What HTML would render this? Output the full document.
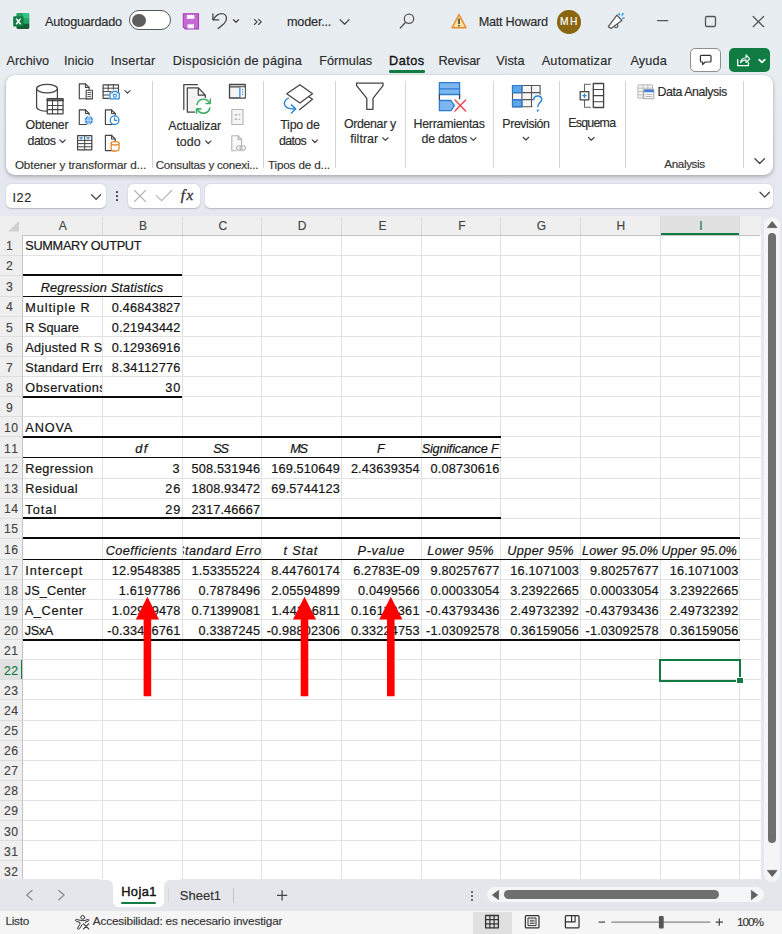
<!DOCTYPE html>
<html lang="es"><head><meta charset="utf-8"><title>Excel</title>
<style>
html,body{margin:0;padding:0;background:#e8edf1;}
body{width:782px;height:934px;overflow:hidden;}
#app{position:relative;width:782px;height:934px;overflow:hidden;background:linear-gradient(180deg,#e8edf1 0,#e8edf1 70px,#e5e8f0 185px,#e5e8f0 100%);font-family:"Liberation Sans",sans-serif;}
.r{position:absolute;}
.t{position:absolute;white-space:pre;line-height:1;}
.clip{position:absolute;overflow:hidden;}
svg{position:absolute;overflow:visible;}

</style></head>
<body>
<div id="app">
<div class="r" style="left:5.60px;top:75.30px;width:767.60px;height:99.90px;background:#ffffff;border-radius:9px;box-shadow:0 2px 4px rgba(0,0,0,.24),0 0 1.5px rgba(0,0,0,.16);"></div>
<div class="r" style="left:389.00px;top:70.10px;width:35.60px;height:2.50px;background:#107c41;border-radius:1.2px;"></div>
<div class="r" style="left:151.90px;top:80.50px;width:1.00px;height:87.50px;background:#d4d4d4;"></div>
<div class="r" style="left:262.50px;top:80.50px;width:1.00px;height:87.50px;background:#d4d4d4;"></div>
<div class="r" style="left:334.90px;top:80.50px;width:1.00px;height:87.50px;background:#d4d4d4;"></div>
<div class="r" style="left:404.70px;top:80.50px;width:1.00px;height:87.50px;background:#d4d4d4;"></div>
<div class="r" style="left:493.30px;top:80.50px;width:1.00px;height:87.50px;background:#d4d4d4;"></div>
<div class="r" style="left:559.00px;top:80.50px;width:1.00px;height:87.50px;background:#d4d4d4;"></div>
<div class="r" style="left:624.80px;top:80.50px;width:1.00px;height:87.50px;background:#d4d4d4;"></div>
<div class="r" style="left:743.00px;top:80.50px;width:1.00px;height:87.50px;background:#d4d4d4;"></div>
<div class="r" style="left:689.60px;top:48.10px;width:31.70px;height:24.20px;background:#fff;border:1px solid #8f8f8f;border-radius:5px;box-sizing:border-box;"></div>
<div class="r" style="left:729.10px;top:48.10px;width:41.40px;height:24.20px;background:#107c41;border-radius:5px;"></div>
<div class="r" style="left:128.60px;top:10.30px;width:42.20px;height:19.90px;background:#fff;border:1.3px solid #555;border-radius:10px;box-sizing:border-box;"></div>
<div class="r" style="left:132.00px;top:13.60px;width:13.60px;height:13.60px;background:#5d5d5d;border-radius:50%;"></div>
<div class="r" style="left:557.00px;top:10.00px;width:23.60px;height:23.60px;background:#8a6611;border-radius:50%;"></div>
<div class="r" style="left:6.30px;top:183.60px;width:100.00px;height:24.40px;background:#fff;border-radius:5px;box-shadow:0 .5px 1.4px rgba(0,0,0,.2),0 0 .8px rgba(0,0,0,.14);"></div>
<div class="r" style="left:127.60px;top:183.60px;width:72.00px;height:24.40px;background:#fff;border-radius:5px;box-shadow:0 .5px 1.4px rgba(0,0,0,.2),0 0 .8px rgba(0,0,0,.14);"></div>
<div class="r" style="left:205.20px;top:183.60px;width:568.20px;height:24.40px;background:#fff;border-radius:5px;box-shadow:0 .5px 1.4px rgba(0,0,0,.2),0 0 .8px rgba(0,0,0,.14);"></div>
<div class="r" style="left:115.70px;top:190.90px;width:2.50px;height:2.50px;background:#3a3a3a;border-radius:35%;"></div>
<div class="r" style="left:115.70px;top:194.90px;width:2.50px;height:2.50px;background:#3a3a3a;border-radius:35%;"></div>
<div class="r" style="left:115.70px;top:198.90px;width:2.50px;height:2.50px;background:#3a3a3a;border-radius:35%;"></div>
<div class="r" style="left:0.00px;top:215.80px;width:760.80px;height:663.70px;background:#fff;"></div>
<div class="r" style="left:0.00px;top:215.80px;width:760.80px;height:19.30px;background:#efefef;"></div>
<div class="r" style="left:0.00px;top:215.80px;width:22.60px;height:663.70px;background:#efefef;"></div>
<div class="r" style="left:660.20px;top:215.80px;width:79.70px;height:19.30px;background:#e1e1e1;"></div>
<div class="r" style="left:660.20px;top:233.10px;width:79.70px;height:2.00px;background:#107c41;"></div>
<div class="r" style="left:0.00px;top:659.78px;width:22.60px;height:20.08px;background:#e1e1e1;"></div>
<div class="r" style="left:20.60px;top:659.78px;width:2.00px;height:20.08px;background:#107c41;"></div>
<div class="r" style="left:101.80px;top:235.10px;width:1.00px;height:644.40px;background:#e2e2e2;"></div>
<div class="r" style="left:101.80px;top:216.80px;width:1.00px;height:18.30px;background:#dadada;"></div>
<div class="r" style="left:181.50px;top:235.10px;width:1.00px;height:644.40px;background:#e2e2e2;"></div>
<div class="r" style="left:181.50px;top:216.80px;width:1.00px;height:18.30px;background:#dadada;"></div>
<div class="r" style="left:261.20px;top:235.10px;width:1.00px;height:644.40px;background:#e2e2e2;"></div>
<div class="r" style="left:261.20px;top:216.80px;width:1.00px;height:18.30px;background:#dadada;"></div>
<div class="r" style="left:340.90px;top:235.10px;width:1.00px;height:644.40px;background:#e2e2e2;"></div>
<div class="r" style="left:340.90px;top:216.80px;width:1.00px;height:18.30px;background:#dadada;"></div>
<div class="r" style="left:420.60px;top:235.10px;width:1.00px;height:644.40px;background:#e2e2e2;"></div>
<div class="r" style="left:420.60px;top:216.80px;width:1.00px;height:18.30px;background:#dadada;"></div>
<div class="r" style="left:500.30px;top:235.10px;width:1.00px;height:644.40px;background:#e2e2e2;"></div>
<div class="r" style="left:500.30px;top:216.80px;width:1.00px;height:18.30px;background:#dadada;"></div>
<div class="r" style="left:580.00px;top:235.10px;width:1.00px;height:644.40px;background:#e2e2e2;"></div>
<div class="r" style="left:580.00px;top:216.80px;width:1.00px;height:18.30px;background:#dadada;"></div>
<div class="r" style="left:659.70px;top:235.10px;width:1.00px;height:644.40px;background:#e2e2e2;"></div>
<div class="r" style="left:659.70px;top:216.80px;width:1.00px;height:18.30px;background:#dadada;"></div>
<div class="r" style="left:739.40px;top:235.10px;width:1.00px;height:644.40px;background:#e2e2e2;"></div>
<div class="r" style="left:739.40px;top:216.80px;width:1.00px;height:18.30px;background:#dadada;"></div>
<div class="r" style="left:22.60px;top:254.68px;width:738.20px;height:1.00px;background:#e2e2e2;"></div>
<div class="r" style="left:0.00px;top:254.68px;width:22.60px;height:1.00px;background:#dedede;"></div>
<div class="r" style="left:22.60px;top:274.76px;width:738.20px;height:1.00px;background:#e2e2e2;"></div>
<div class="r" style="left:0.00px;top:274.76px;width:22.60px;height:1.00px;background:#dedede;"></div>
<div class="r" style="left:22.60px;top:295.84px;width:738.20px;height:1.00px;background:#e2e2e2;"></div>
<div class="r" style="left:0.00px;top:295.84px;width:22.60px;height:1.00px;background:#dedede;"></div>
<div class="r" style="left:22.60px;top:315.92px;width:738.20px;height:1.00px;background:#e2e2e2;"></div>
<div class="r" style="left:0.00px;top:315.92px;width:22.60px;height:1.00px;background:#dedede;"></div>
<div class="r" style="left:22.60px;top:336.00px;width:738.20px;height:1.00px;background:#e2e2e2;"></div>
<div class="r" style="left:0.00px;top:336.00px;width:22.60px;height:1.00px;background:#dedede;"></div>
<div class="r" style="left:22.60px;top:356.08px;width:738.20px;height:1.00px;background:#e2e2e2;"></div>
<div class="r" style="left:0.00px;top:356.08px;width:22.60px;height:1.00px;background:#dedede;"></div>
<div class="r" style="left:22.60px;top:376.16px;width:738.20px;height:1.00px;background:#e2e2e2;"></div>
<div class="r" style="left:0.00px;top:376.16px;width:22.60px;height:1.00px;background:#dedede;"></div>
<div class="r" style="left:22.60px;top:396.24px;width:738.20px;height:1.00px;background:#e2e2e2;"></div>
<div class="r" style="left:0.00px;top:396.24px;width:22.60px;height:1.00px;background:#dedede;"></div>
<div class="r" style="left:22.60px;top:416.32px;width:738.20px;height:1.00px;background:#e2e2e2;"></div>
<div class="r" style="left:0.00px;top:416.32px;width:22.60px;height:1.00px;background:#dedede;"></div>
<div class="r" style="left:22.60px;top:436.40px;width:738.20px;height:1.00px;background:#e2e2e2;"></div>
<div class="r" style="left:0.00px;top:436.40px;width:22.60px;height:1.00px;background:#dedede;"></div>
<div class="r" style="left:22.60px;top:457.48px;width:738.20px;height:1.00px;background:#e2e2e2;"></div>
<div class="r" style="left:0.00px;top:457.48px;width:22.60px;height:1.00px;background:#dedede;"></div>
<div class="r" style="left:22.60px;top:477.56px;width:738.20px;height:1.00px;background:#e2e2e2;"></div>
<div class="r" style="left:0.00px;top:477.56px;width:22.60px;height:1.00px;background:#dedede;"></div>
<div class="r" style="left:22.60px;top:497.64px;width:738.20px;height:1.00px;background:#e2e2e2;"></div>
<div class="r" style="left:0.00px;top:497.64px;width:22.60px;height:1.00px;background:#dedede;"></div>
<div class="r" style="left:22.60px;top:517.72px;width:738.20px;height:1.00px;background:#e2e2e2;"></div>
<div class="r" style="left:0.00px;top:517.72px;width:22.60px;height:1.00px;background:#dedede;"></div>
<div class="r" style="left:22.60px;top:537.80px;width:738.20px;height:1.00px;background:#e2e2e2;"></div>
<div class="r" style="left:0.00px;top:537.80px;width:22.60px;height:1.00px;background:#dedede;"></div>
<div class="r" style="left:22.60px;top:558.88px;width:738.20px;height:1.00px;background:#e2e2e2;"></div>
<div class="r" style="left:0.00px;top:558.88px;width:22.60px;height:1.00px;background:#dedede;"></div>
<div class="r" style="left:22.60px;top:578.96px;width:738.20px;height:1.00px;background:#e2e2e2;"></div>
<div class="r" style="left:0.00px;top:578.96px;width:22.60px;height:1.00px;background:#dedede;"></div>
<div class="r" style="left:22.60px;top:599.04px;width:738.20px;height:1.00px;background:#e2e2e2;"></div>
<div class="r" style="left:0.00px;top:599.04px;width:22.60px;height:1.00px;background:#dedede;"></div>
<div class="r" style="left:22.60px;top:619.12px;width:738.20px;height:1.00px;background:#e2e2e2;"></div>
<div class="r" style="left:0.00px;top:619.12px;width:22.60px;height:1.00px;background:#dedede;"></div>
<div class="r" style="left:22.60px;top:639.20px;width:738.20px;height:1.00px;background:#e2e2e2;"></div>
<div class="r" style="left:0.00px;top:639.20px;width:22.60px;height:1.00px;background:#dedede;"></div>
<div class="r" style="left:22.60px;top:659.28px;width:738.20px;height:1.00px;background:#e2e2e2;"></div>
<div class="r" style="left:0.00px;top:659.28px;width:22.60px;height:1.00px;background:#dedede;"></div>
<div class="r" style="left:22.60px;top:679.36px;width:738.20px;height:1.00px;background:#e2e2e2;"></div>
<div class="r" style="left:0.00px;top:679.36px;width:22.60px;height:1.00px;background:#dedede;"></div>
<div class="r" style="left:22.60px;top:699.44px;width:738.20px;height:1.00px;background:#e2e2e2;"></div>
<div class="r" style="left:0.00px;top:699.44px;width:22.60px;height:1.00px;background:#dedede;"></div>
<div class="r" style="left:22.60px;top:719.52px;width:738.20px;height:1.00px;background:#e2e2e2;"></div>
<div class="r" style="left:0.00px;top:719.52px;width:22.60px;height:1.00px;background:#dedede;"></div>
<div class="r" style="left:22.60px;top:739.60px;width:738.20px;height:1.00px;background:#e2e2e2;"></div>
<div class="r" style="left:0.00px;top:739.60px;width:22.60px;height:1.00px;background:#dedede;"></div>
<div class="r" style="left:22.60px;top:759.68px;width:738.20px;height:1.00px;background:#e2e2e2;"></div>
<div class="r" style="left:0.00px;top:759.68px;width:22.60px;height:1.00px;background:#dedede;"></div>
<div class="r" style="left:22.60px;top:779.76px;width:738.20px;height:1.00px;background:#e2e2e2;"></div>
<div class="r" style="left:0.00px;top:779.76px;width:22.60px;height:1.00px;background:#dedede;"></div>
<div class="r" style="left:22.60px;top:799.84px;width:738.20px;height:1.00px;background:#e2e2e2;"></div>
<div class="r" style="left:0.00px;top:799.84px;width:22.60px;height:1.00px;background:#dedede;"></div>
<div class="r" style="left:22.60px;top:819.92px;width:738.20px;height:1.00px;background:#e2e2e2;"></div>
<div class="r" style="left:0.00px;top:819.92px;width:22.60px;height:1.00px;background:#dedede;"></div>
<div class="r" style="left:22.60px;top:840.00px;width:738.20px;height:1.00px;background:#e2e2e2;"></div>
<div class="r" style="left:0.00px;top:840.00px;width:22.60px;height:1.00px;background:#dedede;"></div>
<div class="r" style="left:22.60px;top:860.08px;width:738.20px;height:1.00px;background:#e2e2e2;"></div>
<div class="r" style="left:0.00px;top:860.08px;width:22.60px;height:1.00px;background:#dedede;"></div>
<div class="r" style="left:22.10px;top:234.50px;width:738.20px;height:1.00px;background:#c4c4c4;"></div>
<div class="r" style="left:22.00px;top:235.10px;width:1.00px;height:644.40px;background:#c4c4c4;"></div>
<div class="r" style="left:101.30px;top:236.10px;width:2.00px;height:18.08px;background:#fff;"></div>
<div class="r" style="left:101.30px;top:276.26px;width:2.00px;height:18.08px;background:#fff;"></div>
<svg style="left:8.4px;top:221px" width="11" height="10.5" viewBox="0 0 11 10.5"><path d="M11 0V10.5H0Z" fill="#cfcfcf"/></svg>
<div class="r" style="left:22.60px;top:274.31px;width:159.90px;height:1.90px;background:#0a0a0a;"></div>
<div class="r" style="left:22.60px;top:295.84px;width:159.90px;height:1.00px;background:#0a0a0a;"></div>
<div class="r" style="left:22.60px;top:395.79px;width:159.90px;height:1.90px;background:#0a0a0a;"></div>
<div class="r" style="left:22.60px;top:435.95px;width:478.70px;height:1.90px;background:#0a0a0a;"></div>
<div class="r" style="left:22.60px;top:457.48px;width:478.70px;height:1.00px;background:#0a0a0a;"></div>
<div class="r" style="left:22.60px;top:517.27px;width:478.70px;height:1.90px;background:#0a0a0a;"></div>
<div class="r" style="left:22.60px;top:537.35px;width:717.80px;height:1.90px;background:#0a0a0a;"></div>
<div class="r" style="left:22.60px;top:558.88px;width:717.80px;height:1.00px;background:#0a0a0a;"></div>
<div class="r" style="left:22.60px;top:638.75px;width:717.80px;height:1.90px;background:#0a0a0a;"></div>
<div class="r" style="left:760.80px;top:215.80px;width:21.20px;height:663.70px;background:#e5e8f0;"></div>
<div class="r" style="left:100.00px;top:878.50px;width:80.00px;height:12.00px;background:#fff;"></div>
<div class="r" style="left:0.00px;top:879.50px;width:113.20px;height:31.30px;background:#e4e6eb;border-top-right-radius:6px;"></div>
<div class="r" style="left:164.00px;top:879.50px;width:618.00px;height:31.30px;background:#e4e6eb;border-top-left-radius:6px;"></div>
<div class="r" style="left:100.00px;top:900.00px;width:80.00px;height:10.80px;background:#e4e6eb;"></div>
<div class="r" style="left:763.50px;top:217.30px;width:16.10px;height:664.30px;background:#f5f5f6;border-radius:8px;"></div>
<div class="r" style="left:767.50px;top:233.00px;width:8.40px;height:609.90px;background:#6f6f6f;border-radius:4.2px;"></div>
<svg style="left:766.7px;top:221.0px" width="10.4" height="7" viewBox="0 0 10.4 7"><path d="M5.2 0.4L10 6.6H0.4Z" fill="#5f5f5f" stroke="#5f5f5f" stroke-width=".8" stroke-linejoin="round"/></svg>
<svg style="left:766.7px;top:870.4px" width="10.4" height="7" viewBox="0 0 10.4 7"><path d="M5.2 6.6L10 0.4H0.4Z" fill="#5f5f5f" stroke="#5f5f5f" stroke-width=".8" stroke-linejoin="round"/></svg>
<div class="r" style="left:113.20px;top:883.50px;width:50.80px;height:23.40px;background:#fff;border-radius:0 0 6px 6px;"></div>
<div class="r" style="left:120.80px;top:902.30px;width:35.20px;height:2.00px;background:#107c41;border-radius:1px;"></div>
<div class="r" style="left:233.40px;top:887.60px;width:1.00px;height:15.60px;background:#c2c5ca;"></div>
<div class="r" style="left:168.10px;top:887.60px;width:1.00px;height:15.60px;background:#d6d9de;"></div>
<div class="r" style="left:487.20px;top:887.00px;width:276.40px;height:15.40px;background:#f5f6f7;border-radius:7.7px;"></div>
<div class="r" style="left:504.30px;top:889.80px;width:214.30px;height:9.40px;background:#6f6f6f;border-radius:4.7px;"></div>
<svg style="left:492.2px;top:889.6px" width="7" height="10" viewBox="0 0 7 10"><path d="M0.4 5L6.6 0.4V9.6Z" fill="#5f5f5f" stroke="#5f5f5f" stroke-width=".8" stroke-linejoin="round"/></svg>
<svg style="left:751.2px;top:889.6px" width="7" height="10" viewBox="0 0 7 10"><path d="M6.6 5L0.4 0.4V9.6Z" fill="#5f5f5f" stroke="#5f5f5f" stroke-width=".8" stroke-linejoin="round"/></svg>
<div class="r" style="left:470.50px;top:890.60px;width:2.00px;height:2.00px;background:#444;border-radius:50%;"></div>
<div class="r" style="left:470.50px;top:895.00px;width:2.00px;height:2.00px;background:#444;border-radius:50%;"></div>
<div class="r" style="left:470.50px;top:899.40px;width:2.00px;height:2.00px;background:#444;border-radius:50%;"></div>
<div class="r" style="left:0.00px;top:910.80px;width:782.00px;height:23.20px;background:#f5f5f5;"></div>
<div class="r" style="left:473.00px;top:912.30px;width:39.10px;height:21.70px;background:#e0e0e0;"></div>
<span class="t" style="left:45.06px;top:15.50px;font-family:'Liberation Sans', sans-serif;font-size:12.7px;font-weight:400;font-style:normal;color:#2b2b2b;letter-spacing:-0.251px;-webkit-text-stroke:0.15px currentColor;">Autoguardado</span>
<span class="t" style="left:286.96px;top:15.90px;font-family:'Liberation Sans', sans-serif;font-size:12.7px;font-weight:400;font-style:normal;color:#2b2b2b;letter-spacing:-0.199px;-webkit-text-stroke:0.15px currentColor;">moder...</span>
<span class="t" style="left:478.76px;top:15.90px;font-family:'Liberation Sans', sans-serif;font-size:12.7px;font-weight:400;font-style:normal;color:#2b2b2b;letter-spacing:-0.267px;-webkit-text-stroke:0.15px currentColor;">Matt Howard</span>
<span class="t" style="left:560.04px;top:16.55px;font-family:'Liberation Sans', sans-serif;font-size:10.2px;font-weight:400;font-style:normal;color:#fff;letter-spacing:1.521px;-webkit-text-stroke:0.15px currentColor;">MH</span>
<span class="t" style="left:6.46px;top:55.10px;font-family:'Liberation Sans', sans-serif;font-size:12.7px;font-weight:400;font-style:normal;color:#2b2b2b;letter-spacing:0.057px;-webkit-text-stroke:0.15px currentColor;">Archivo</span>
<span class="t" style="left:64.06px;top:55.10px;font-family:'Liberation Sans', sans-serif;font-size:12.7px;font-weight:400;font-style:normal;color:#2b2b2b;letter-spacing:0.046px;-webkit-text-stroke:0.15px currentColor;">Inicio</span>
<span class="t" style="left:110.86px;top:55.10px;font-family:'Liberation Sans', sans-serif;font-size:12.7px;font-weight:400;font-style:normal;color:#2b2b2b;letter-spacing:0.191px;-webkit-text-stroke:0.15px currentColor;">Insertar</span>
<span class="t" style="left:172.86px;top:55.10px;font-family:'Liberation Sans', sans-serif;font-size:12.7px;font-weight:400;font-style:normal;color:#2b2b2b;letter-spacing:0.246px;-webkit-text-stroke:0.15px currentColor;">Disposición de página</span>
<span class="t" style="left:319.26px;top:55.10px;font-family:'Liberation Sans', sans-serif;font-size:12.7px;font-weight:400;font-style:normal;color:#2b2b2b;letter-spacing:-0.003px;-webkit-text-stroke:0.15px currentColor;">Fórmulas</span>
<span class="t" style="left:389.06px;top:55.10px;font-family:'Liberation Sans', sans-serif;font-size:12.7px;font-weight:400;font-style:normal;color:#111;letter-spacing:0.449px;-webkit-text-stroke:0.35px #111;">Datos</span>
<span class="t" style="left:438.46px;top:55.10px;font-family:'Liberation Sans', sans-serif;font-size:12.7px;font-weight:400;font-style:normal;color:#2b2b2b;letter-spacing:-0.194px;-webkit-text-stroke:0.15px currentColor;">Revisar</span>
<span class="t" style="left:496.16px;top:55.10px;font-family:'Liberation Sans', sans-serif;font-size:12.7px;font-weight:400;font-style:normal;color:#2b2b2b;letter-spacing:0.092px;-webkit-text-stroke:0.15px currentColor;">Vista</span>
<span class="t" style="left:541.66px;top:55.10px;font-family:'Liberation Sans', sans-serif;font-size:12.7px;font-weight:400;font-style:normal;color:#2b2b2b;letter-spacing:0.235px;-webkit-text-stroke:0.15px currentColor;">Automatizar</span>
<span class="t" style="left:630.46px;top:55.10px;font-family:'Liberation Sans', sans-serif;font-size:12.7px;font-weight:400;font-style:normal;color:#2b2b2b;letter-spacing:0.126px;-webkit-text-stroke:0.15px currentColor;">Ayuda</span>
<span class="t" style="left:25.57px;top:119.25px;font-family:'Liberation Sans', sans-serif;font-size:12.4px;font-weight:400;font-style:normal;color:#2b2b2b;letter-spacing:-0.292px;-webkit-text-stroke:0.15px currentColor;">Obtener</span>
<span class="t" style="left:27.57px;top:135.05px;font-family:'Liberation Sans', sans-serif;font-size:12.4px;font-weight:400;font-style:normal;color:#2b2b2b;letter-spacing:-0.496px;-webkit-text-stroke:0.15px currentColor;">datos</span>
<span class="t" style="left:168.37px;top:120.25px;font-family:'Liberation Sans', sans-serif;font-size:12.4px;font-weight:400;font-style:normal;color:#2b2b2b;letter-spacing:-0.186px;-webkit-text-stroke:0.15px currentColor;">Actualizar</span>
<span class="t" style="left:176.17px;top:136.05px;font-family:'Liberation Sans', sans-serif;font-size:12.4px;font-weight:400;font-style:normal;color:#2b2b2b;letter-spacing:0.102px;-webkit-text-stroke:0.15px currentColor;">todo</span>
<span class="t" style="left:280.17px;top:119.25px;font-family:'Liberation Sans', sans-serif;font-size:12.4px;font-weight:400;font-style:normal;color:#2b2b2b;letter-spacing:-0.191px;-webkit-text-stroke:0.15px currentColor;">Tipo de</span>
<span class="t" style="left:279.07px;top:135.05px;font-family:'Liberation Sans', sans-serif;font-size:12.4px;font-weight:400;font-style:normal;color:#2b2b2b;letter-spacing:-0.646px;-webkit-text-stroke:0.15px currentColor;">datos</span>
<span class="t" style="left:343.97px;top:117.85px;font-family:'Liberation Sans', sans-serif;font-size:12.4px;font-weight:400;font-style:normal;color:#2b2b2b;letter-spacing:-0.358px;-webkit-text-stroke:0.15px currentColor;">Ordenar y</span>
<span class="t" style="left:350.27px;top:132.95px;font-family:'Liberation Sans', sans-serif;font-size:12.4px;font-weight:400;font-style:normal;color:#2b2b2b;letter-spacing:0.064px;-webkit-text-stroke:0.15px currentColor;">filtrar</span>
<span class="t" style="left:413.57px;top:117.85px;font-family:'Liberation Sans', sans-serif;font-size:12.4px;font-weight:400;font-style:normal;color:#2b2b2b;letter-spacing:-0.277px;-webkit-text-stroke:0.15px currentColor;">Herramientas</span>
<span class="t" style="left:421.57px;top:132.95px;font-family:'Liberation Sans', sans-serif;font-size:12.4px;font-weight:400;font-style:normal;color:#2b2b2b;letter-spacing:-0.288px;-webkit-text-stroke:0.15px currentColor;">de datos</span>
<span class="t" style="left:502.37px;top:117.85px;font-family:'Liberation Sans', sans-serif;font-size:12.4px;font-weight:400;font-style:normal;color:#2b2b2b;letter-spacing:-0.430px;-webkit-text-stroke:0.15px currentColor;">Previsión</span>
<span class="t" style="left:568.17px;top:117.15px;font-family:'Liberation Sans', sans-serif;font-size:12.4px;font-weight:400;font-style:normal;color:#2b2b2b;letter-spacing:-0.738px;-webkit-text-stroke:0.15px currentColor;">Esquema</span>
<span class="t" style="left:657.57px;top:86.25px;font-family:'Liberation Sans', sans-serif;font-size:12.4px;font-weight:400;font-style:normal;color:#2b2b2b;letter-spacing:-0.446px;-webkit-text-stroke:0.15px currentColor;">Data Analysis</span>
<span class="t" style="left:14.89px;top:158.60px;font-family:'Liberation Sans', sans-serif;font-size:11.7px;font-weight:400;font-style:normal;color:#333;letter-spacing:-0.101px;-webkit-text-stroke:0.15px currentColor;">Obtener y transformar d...</span>
<span class="t" style="left:155.69px;top:158.60px;font-family:'Liberation Sans', sans-serif;font-size:11.7px;font-weight:400;font-style:normal;color:#333;letter-spacing:-0.253px;-webkit-text-stroke:0.15px currentColor;">Consultas y conexi...</span>
<span class="t" style="left:267.89px;top:158.60px;font-family:'Liberation Sans', sans-serif;font-size:11.7px;font-weight:400;font-style:normal;color:#333;letter-spacing:-0.143px;-webkit-text-stroke:0.15px currentColor;">Tipos de d...</span>
<span class="t" style="left:664.29px;top:158.10px;font-family:'Liberation Sans', sans-serif;font-size:11.7px;font-weight:400;font-style:normal;color:#333;letter-spacing:-0.379px;-webkit-text-stroke:0.15px currentColor;">Analysis</span>
<span class="t" style="left:12.46px;top:191.70px;font-family:'Liberation Sans', sans-serif;font-size:12.7px;font-weight:400;font-style:normal;color:#2b2b2b;letter-spacing:0.556px;-webkit-text-stroke:0.15px currentColor;">I22</span>
<span class="t" style="left:180.67px;top:188.35px;font-family:'Liberation Serif', serif;font-size:15.0px;font-weight:400;font-style:italic;color:#333;letter-spacing:1.600px;-webkit-text-stroke:0.35px #333;">fx</span>
<span class="t" style="left:121.15px;top:886.35px;font-family:'Liberation Sans', sans-serif;font-size:12.8px;font-weight:400;font-style:normal;color:#111;letter-spacing:0.456px;-webkit-text-stroke:0.4px #111;">Hoja1</span>
<span class="t" style="left:179.84px;top:888.85px;font-family:'Liberation Sans', sans-serif;font-size:13.0px;font-weight:400;font-style:normal;color:#333;letter-spacing:-0.006px;-webkit-text-stroke:0.15px currentColor;">Sheet1</span>
<span class="t" style="left:5.39px;top:916.35px;font-family:'Liberation Sans', sans-serif;font-size:11.8px;font-weight:400;font-style:normal;color:#333;letter-spacing:-0.259px;-webkit-text-stroke:0.15px currentColor;">Listo</span>
<span class="t" style="left:92.79px;top:916.35px;font-family:'Liberation Sans', sans-serif;font-size:11.8px;font-weight:400;font-style:normal;color:#333;letter-spacing:-0.172px;-webkit-text-stroke:0.15px currentColor;">Accesibilidad: es necesario investigar</span>
<span class="t" style="left:736.99px;top:916.65px;font-family:'Liberation Sans', sans-serif;font-size:11.8px;font-weight:400;font-style:normal;color:#333;letter-spacing:-1.034px;-webkit-text-stroke:0.15px currentColor;">100%</span>
<span class="t" style="left:58.68px;top:220.15px;font-family:'Liberation Sans', sans-serif;font-size:12.0px;font-weight:400;font-style:normal;color:#444;letter-spacing:0.000px;-webkit-text-stroke:0.15px currentColor;">A</span>
<span class="t" style="left:138.93px;top:220.15px;font-family:'Liberation Sans', sans-serif;font-size:12.0px;font-weight:400;font-style:normal;color:#444;letter-spacing:0.000px;-webkit-text-stroke:0.15px currentColor;">B</span>
<span class="t" style="left:218.43px;top:220.15px;font-family:'Liberation Sans', sans-serif;font-size:12.0px;font-weight:400;font-style:normal;color:#444;letter-spacing:0.000px;-webkit-text-stroke:0.15px currentColor;">C</span>
<span class="t" style="left:297.73px;top:220.15px;font-family:'Liberation Sans', sans-serif;font-size:12.0px;font-weight:400;font-style:normal;color:#444;letter-spacing:0.000px;-webkit-text-stroke:0.15px currentColor;">D</span>
<span class="t" style="left:378.53px;top:220.15px;font-family:'Liberation Sans', sans-serif;font-size:12.0px;font-weight:400;font-style:normal;color:#444;letter-spacing:0.000px;-webkit-text-stroke:0.15px currentColor;">E</span>
<span class="t" style="left:458.33px;top:220.15px;font-family:'Liberation Sans', sans-serif;font-size:12.0px;font-weight:400;font-style:normal;color:#444;letter-spacing:0.000px;-webkit-text-stroke:0.15px currentColor;">F</span>
<span class="t" style="left:536.73px;top:220.15px;font-family:'Liberation Sans', sans-serif;font-size:12.0px;font-weight:400;font-style:normal;color:#444;letter-spacing:0.000px;-webkit-text-stroke:0.15px currentColor;">G</span>
<span class="t" style="left:616.53px;top:220.15px;font-family:'Liberation Sans', sans-serif;font-size:12.0px;font-weight:400;font-style:normal;color:#444;letter-spacing:0.000px;-webkit-text-stroke:0.15px currentColor;">H</span>
<span class="t" style="left:699.33px;top:220.15px;font-family:'Liberation Sans', sans-serif;font-size:12.0px;font-weight:400;font-style:normal;color:#107c41;letter-spacing:0.000px;-webkit-text-stroke:0.15px currentColor;">I</span>
<span class="t" style="left:6.07px;top:240.23px;font-family:'Liberation Sans', sans-serif;font-size:12.2px;font-weight:400;font-style:normal;color:#444;letter-spacing:0.000px;-webkit-text-stroke:0.15px currentColor;">1</span>
<span class="t" style="left:6.07px;top:260.31px;font-family:'Liberation Sans', sans-serif;font-size:12.2px;font-weight:400;font-style:normal;color:#444;letter-spacing:0.000px;-webkit-text-stroke:0.15px currentColor;">2</span>
<span class="t" style="left:6.07px;top:281.39px;font-family:'Liberation Sans', sans-serif;font-size:12.2px;font-weight:400;font-style:normal;color:#444;letter-spacing:0.000px;-webkit-text-stroke:0.15px currentColor;">3</span>
<span class="t" style="left:6.07px;top:301.47px;font-family:'Liberation Sans', sans-serif;font-size:12.2px;font-weight:400;font-style:normal;color:#444;letter-spacing:0.000px;-webkit-text-stroke:0.15px currentColor;">4</span>
<span class="t" style="left:6.07px;top:321.55px;font-family:'Liberation Sans', sans-serif;font-size:12.2px;font-weight:400;font-style:normal;color:#444;letter-spacing:0.000px;-webkit-text-stroke:0.15px currentColor;">5</span>
<span class="t" style="left:6.07px;top:341.63px;font-family:'Liberation Sans', sans-serif;font-size:12.2px;font-weight:400;font-style:normal;color:#444;letter-spacing:0.000px;-webkit-text-stroke:0.15px currentColor;">6</span>
<span class="t" style="left:6.07px;top:361.71px;font-family:'Liberation Sans', sans-serif;font-size:12.2px;font-weight:400;font-style:normal;color:#444;letter-spacing:0.000px;-webkit-text-stroke:0.15px currentColor;">7</span>
<span class="t" style="left:6.07px;top:381.79px;font-family:'Liberation Sans', sans-serif;font-size:12.2px;font-weight:400;font-style:normal;color:#444;letter-spacing:0.000px;-webkit-text-stroke:0.15px currentColor;">8</span>
<span class="t" style="left:6.07px;top:401.87px;font-family:'Liberation Sans', sans-serif;font-size:12.2px;font-weight:400;font-style:normal;color:#444;letter-spacing:0.000px;-webkit-text-stroke:0.15px currentColor;">9</span>
<span class="t" style="left:3.97px;top:421.95px;font-family:'Liberation Sans', sans-serif;font-size:12.2px;font-weight:400;font-style:normal;color:#444;letter-spacing:0.553px;-webkit-text-stroke:0.15px currentColor;">10</span>
<span class="t" style="left:3.97px;top:443.03px;font-family:'Liberation Sans', sans-serif;font-size:12.2px;font-weight:400;font-style:normal;color:#444;letter-spacing:1.459px;-webkit-text-stroke:0.15px currentColor;">11</span>
<span class="t" style="left:3.97px;top:463.11px;font-family:'Liberation Sans', sans-serif;font-size:12.2px;font-weight:400;font-style:normal;color:#444;letter-spacing:0.553px;-webkit-text-stroke:0.15px currentColor;">12</span>
<span class="t" style="left:3.97px;top:483.19px;font-family:'Liberation Sans', sans-serif;font-size:12.2px;font-weight:400;font-style:normal;color:#444;letter-spacing:0.553px;-webkit-text-stroke:0.15px currentColor;">13</span>
<span class="t" style="left:3.97px;top:503.27px;font-family:'Liberation Sans', sans-serif;font-size:12.2px;font-weight:400;font-style:normal;color:#444;letter-spacing:0.553px;-webkit-text-stroke:0.15px currentColor;">14</span>
<span class="t" style="left:3.97px;top:523.35px;font-family:'Liberation Sans', sans-serif;font-size:12.2px;font-weight:400;font-style:normal;color:#444;letter-spacing:0.553px;-webkit-text-stroke:0.15px currentColor;">15</span>
<span class="t" style="left:3.97px;top:544.43px;font-family:'Liberation Sans', sans-serif;font-size:12.2px;font-weight:400;font-style:normal;color:#444;letter-spacing:0.553px;-webkit-text-stroke:0.15px currentColor;">16</span>
<span class="t" style="left:3.97px;top:564.51px;font-family:'Liberation Sans', sans-serif;font-size:12.2px;font-weight:400;font-style:normal;color:#444;letter-spacing:0.553px;-webkit-text-stroke:0.15px currentColor;">17</span>
<span class="t" style="left:3.97px;top:584.59px;font-family:'Liberation Sans', sans-serif;font-size:12.2px;font-weight:400;font-style:normal;color:#444;letter-spacing:0.553px;-webkit-text-stroke:0.15px currentColor;">18</span>
<span class="t" style="left:3.97px;top:604.67px;font-family:'Liberation Sans', sans-serif;font-size:12.2px;font-weight:400;font-style:normal;color:#444;letter-spacing:0.553px;-webkit-text-stroke:0.15px currentColor;">19</span>
<span class="t" style="left:3.97px;top:624.75px;font-family:'Liberation Sans', sans-serif;font-size:12.2px;font-weight:400;font-style:normal;color:#444;letter-spacing:0.553px;-webkit-text-stroke:0.15px currentColor;">20</span>
<span class="t" style="left:3.97px;top:644.83px;font-family:'Liberation Sans', sans-serif;font-size:12.2px;font-weight:400;font-style:normal;color:#444;letter-spacing:0.553px;-webkit-text-stroke:0.15px currentColor;">21</span>
<span class="t" style="left:3.97px;top:664.91px;font-family:'Liberation Sans', sans-serif;font-size:12.2px;font-weight:400;font-style:normal;color:#107c41;letter-spacing:0.553px;-webkit-text-stroke:0.15px currentColor;">22</span>
<span class="t" style="left:3.97px;top:684.99px;font-family:'Liberation Sans', sans-serif;font-size:12.2px;font-weight:400;font-style:normal;color:#444;letter-spacing:0.553px;-webkit-text-stroke:0.15px currentColor;">23</span>
<span class="t" style="left:3.97px;top:705.07px;font-family:'Liberation Sans', sans-serif;font-size:12.2px;font-weight:400;font-style:normal;color:#444;letter-spacing:0.553px;-webkit-text-stroke:0.15px currentColor;">24</span>
<span class="t" style="left:3.97px;top:725.15px;font-family:'Liberation Sans', sans-serif;font-size:12.2px;font-weight:400;font-style:normal;color:#444;letter-spacing:0.553px;-webkit-text-stroke:0.15px currentColor;">25</span>
<span class="t" style="left:3.97px;top:745.23px;font-family:'Liberation Sans', sans-serif;font-size:12.2px;font-weight:400;font-style:normal;color:#444;letter-spacing:0.553px;-webkit-text-stroke:0.15px currentColor;">26</span>
<span class="t" style="left:3.97px;top:765.31px;font-family:'Liberation Sans', sans-serif;font-size:12.2px;font-weight:400;font-style:normal;color:#444;letter-spacing:0.553px;-webkit-text-stroke:0.15px currentColor;">27</span>
<span class="t" style="left:3.97px;top:785.39px;font-family:'Liberation Sans', sans-serif;font-size:12.2px;font-weight:400;font-style:normal;color:#444;letter-spacing:0.553px;-webkit-text-stroke:0.15px currentColor;">28</span>
<span class="t" style="left:3.97px;top:805.47px;font-family:'Liberation Sans', sans-serif;font-size:12.2px;font-weight:400;font-style:normal;color:#444;letter-spacing:0.553px;-webkit-text-stroke:0.15px currentColor;">29</span>
<span class="t" style="left:3.97px;top:825.55px;font-family:'Liberation Sans', sans-serif;font-size:12.2px;font-weight:400;font-style:normal;color:#444;letter-spacing:0.553px;-webkit-text-stroke:0.15px currentColor;">30</span>
<span class="t" style="left:3.97px;top:845.63px;font-family:'Liberation Sans', sans-serif;font-size:12.2px;font-weight:400;font-style:normal;color:#444;letter-spacing:0.553px;-webkit-text-stroke:0.15px currentColor;">31</span>
<span class="t" style="left:3.97px;top:865.71px;font-family:'Liberation Sans', sans-serif;font-size:12.2px;font-weight:400;font-style:normal;color:#444;letter-spacing:0.553px;-webkit-text-stroke:0.15px currentColor;">32</span>
<span class="t" style="left:25.36px;top:240.48px;font-family:'Liberation Sans', sans-serif;font-size:12.7px;font-weight:400;font-style:normal;color:#141414;letter-spacing:-0.310px;-webkit-text-stroke:0.2px #141414;">SUMMARY OUTPUT</span>
<span class="t" style="left:40.76px;top:281.64px;font-family:'Liberation Sans', sans-serif;font-size:12.7px;font-weight:400;font-style:italic;color:#141414;letter-spacing:0.199px;-webkit-text-stroke:0.2px #141414;">Regression Statistics</span>
<span class="t" style="left:25.36px;top:301.72px;font-family:'Liberation Sans', sans-serif;font-size:12.7px;font-weight:400;font-style:normal;color:#141414;letter-spacing:0.872px;-webkit-text-stroke:0.2px #141414;">Multiple R</span>
<span class="t" style="left:25.36px;top:321.80px;font-family:'Liberation Sans', sans-serif;font-size:12.7px;font-weight:400;font-style:normal;color:#141414;letter-spacing:-0.008px;-webkit-text-stroke:0.2px #141414;">R Square</span>
<div class="clip" style="left:22.60px;top:341.88px;width:79.30px;height:16.5px"><span class="t" style="left:2.76px;top:0;font-family:'Liberation Sans', sans-serif;font-size:12.7px;font-weight:400;font-style:normal;color:#141414;letter-spacing:0.245px;-webkit-text-stroke:0.2px #141414;">Adjusted R Square</span></div>
<div class="clip" style="left:22.60px;top:361.96px;width:79.30px;height:16.5px"><span class="t" style="left:2.76px;top:0;font-family:'Liberation Sans', sans-serif;font-size:12.7px;font-weight:400;font-style:normal;color:#141414;letter-spacing:0.174px;-webkit-text-stroke:0.2px #141414;">Standard Error</span></div>
<div class="clip" style="left:22.60px;top:382.04px;width:79.30px;height:16.5px"><span class="t" style="left:2.76px;top:0;font-family:'Liberation Sans', sans-serif;font-size:12.7px;font-weight:400;font-style:normal;color:#141414;letter-spacing:0.505px;-webkit-text-stroke:0.2px #141414;">Observations</span></div>
<span class="t" style="left:111.79px;top:301.72px;font-family:'Liberation Sans', sans-serif;font-size:12.7px;font-weight:400;font-style:normal;color:#141414;letter-spacing:0.177px;-webkit-text-stroke:0.2px #141414;">0.46843827</span>
<span class="t" style="left:111.79px;top:321.80px;font-family:'Liberation Sans', sans-serif;font-size:12.7px;font-weight:400;font-style:normal;color:#141414;letter-spacing:0.177px;-webkit-text-stroke:0.2px #141414;">0.21943442</span>
<span class="t" style="left:111.79px;top:341.88px;font-family:'Liberation Sans', sans-serif;font-size:12.7px;font-weight:400;font-style:normal;color:#141414;letter-spacing:0.177px;-webkit-text-stroke:0.2px #141414;">0.12936916</span>
<span class="t" style="left:111.79px;top:361.96px;font-family:'Liberation Sans', sans-serif;font-size:12.7px;font-weight:400;font-style:normal;color:#141414;letter-spacing:0.281px;-webkit-text-stroke:0.2px #141414;">8.34112776</span>
<span class="t" style="left:165.32px;top:382.04px;font-family:'Liberation Sans', sans-serif;font-size:12.7px;font-weight:400;font-style:normal;color:#141414;letter-spacing:0.968px;-webkit-text-stroke:0.2px #141414;">30</span>
<span class="t" style="left:25.36px;top:422.20px;font-family:'Liberation Sans', sans-serif;font-size:12.7px;font-weight:400;font-style:normal;color:#141414;letter-spacing:0.867px;-webkit-text-stroke:0.2px #141414;">ANOVA</span>
<span class="t" style="left:135.21px;top:443.28px;font-family:'Liberation Sans', sans-serif;font-size:12.7px;font-weight:400;font-style:italic;color:#141414;letter-spacing:1.600px;-webkit-text-stroke:0.2px #141414;">df</span>
<span class="t" style="left:213.26px;top:443.28px;font-family:'Liberation Sans', sans-serif;font-size:12.7px;font-weight:400;font-style:italic;color:#141414;letter-spacing:-1.200px;-webkit-text-stroke:0.2px #141414;">SS</span>
<span class="t" style="left:290.26px;top:443.28px;font-family:'Liberation Sans', sans-serif;font-size:12.7px;font-weight:400;font-style:italic;color:#141414;letter-spacing:-1.200px;-webkit-text-stroke:0.2px #141414;">MS</span>
<span class="t" style="left:377.06px;top:443.28px;font-family:'Liberation Sans', sans-serif;font-size:12.7px;font-weight:400;font-style:italic;color:#141414;letter-spacing:0.000px;-webkit-text-stroke:0.2px #141414;">F</span>
<span class="t" style="left:421.71px;top:443.28px;font-family:'Liberation Sans', sans-serif;font-size:12.7px;font-weight:400;font-style:italic;color:#141414;letter-spacing:-0.210px;-webkit-text-stroke:0.2px #141414;">Significance F</span>
<span class="t" style="left:25.36px;top:463.36px;font-family:'Liberation Sans', sans-serif;font-size:12.7px;font-weight:400;font-style:normal;color:#141414;letter-spacing:0.385px;-webkit-text-stroke:0.2px #141414;">Regression</span>
<span class="t" style="left:25.36px;top:483.44px;font-family:'Liberation Sans', sans-serif;font-size:12.7px;font-weight:400;font-style:normal;color:#141414;letter-spacing:0.411px;-webkit-text-stroke:0.2px #141414;">Residual</span>
<span class="t" style="left:25.36px;top:503.52px;font-family:'Liberation Sans', sans-serif;font-size:12.7px;font-weight:400;font-style:normal;color:#141414;letter-spacing:1.010px;-webkit-text-stroke:0.2px #141414;">Total</span>
<span class="t" style="left:172.39px;top:463.36px;font-family:'Liberation Sans', sans-serif;font-size:12.7px;font-weight:400;font-style:normal;color:#141414;letter-spacing:0.000px;-webkit-text-stroke:0.2px #141414;">3</span>
<span class="t" style="left:191.49px;top:463.36px;font-family:'Liberation Sans', sans-serif;font-size:12.7px;font-weight:400;font-style:normal;color:#141414;letter-spacing:0.177px;-webkit-text-stroke:0.2px #141414;">508.531946</span>
<span class="t" style="left:271.19px;top:463.36px;font-family:'Liberation Sans', sans-serif;font-size:12.7px;font-weight:400;font-style:normal;color:#141414;letter-spacing:0.177px;-webkit-text-stroke:0.2px #141414;">169.510649</span>
<span class="t" style="left:350.89px;top:463.36px;font-family:'Liberation Sans', sans-serif;font-size:12.7px;font-weight:400;font-style:normal;color:#141414;letter-spacing:0.177px;-webkit-text-stroke:0.2px #141414;">2.43639354</span>
<span class="t" style="left:430.59px;top:463.36px;font-family:'Liberation Sans', sans-serif;font-size:12.7px;font-weight:400;font-style:normal;color:#141414;letter-spacing:0.177px;-webkit-text-stroke:0.2px #141414;">0.08730616</span>
<span class="t" style="left:165.32px;top:483.44px;font-family:'Liberation Sans', sans-serif;font-size:12.7px;font-weight:400;font-style:normal;color:#141414;letter-spacing:0.968px;-webkit-text-stroke:0.2px #141414;">26</span>
<span class="t" style="left:191.49px;top:483.44px;font-family:'Liberation Sans', sans-serif;font-size:12.7px;font-weight:400;font-style:normal;color:#141414;letter-spacing:0.177px;-webkit-text-stroke:0.2px #141414;">1808.93472</span>
<span class="t" style="left:271.19px;top:483.44px;font-family:'Liberation Sans', sans-serif;font-size:12.7px;font-weight:400;font-style:normal;color:#141414;letter-spacing:0.177px;-webkit-text-stroke:0.2px #141414;">69.5744123</span>
<span class="t" style="left:165.32px;top:503.52px;font-family:'Liberation Sans', sans-serif;font-size:12.7px;font-weight:400;font-style:normal;color:#141414;letter-spacing:0.968px;-webkit-text-stroke:0.2px #141414;">29</span>
<span class="t" style="left:191.49px;top:503.52px;font-family:'Liberation Sans', sans-serif;font-size:12.7px;font-weight:400;font-style:normal;color:#141414;letter-spacing:0.177px;-webkit-text-stroke:0.2px #141414;">2317.46667</span>
<span class="t" style="left:105.71px;top:544.68px;font-family:'Liberation Sans', sans-serif;font-size:12.7px;font-weight:400;font-style:italic;color:#141414;letter-spacing:0.441px;-webkit-text-stroke:0.2px #141414;">Coefficients</span>
<div class="clip" style="left:182.80px;top:544.68px;width:78.60px;height:16.5px"><span class="t" style="left:-6.89px;top:0;font-family:'Liberation Sans', sans-serif;font-size:12.7px;font-weight:400;font-style:italic;color:#141414;letter-spacing:0.518px;-webkit-text-stroke:0.2px #141414;">Standard Error</span></div>
<span class="t" style="left:283.41px;top:544.68px;font-family:'Liberation Sans', sans-serif;font-size:12.7px;font-weight:400;font-style:italic;color:#141414;letter-spacing:0.866px;-webkit-text-stroke:0.2px #141414;">t Stat</span>
<span class="t" style="left:357.61px;top:544.68px;font-family:'Liberation Sans', sans-serif;font-size:12.7px;font-weight:400;font-style:italic;color:#141414;letter-spacing:0.620px;-webkit-text-stroke:0.2px #141414;">P-value</span>
<span class="t" style="left:427.36px;top:544.68px;font-family:'Liberation Sans', sans-serif;font-size:12.7px;font-weight:400;font-style:italic;color:#141414;letter-spacing:0.346px;-webkit-text-stroke:0.2px #141414;">Lower 95%</span>
<span class="t" style="left:507.31px;top:544.68px;font-family:'Liberation Sans', sans-serif;font-size:12.7px;font-weight:400;font-style:italic;color:#141414;letter-spacing:0.359px;-webkit-text-stroke:0.2px #141414;">Upper 95%</span>
<span class="t" style="left:582.01px;top:544.68px;font-family:'Liberation Sans', sans-serif;font-size:12.7px;font-weight:400;font-style:italic;color:#141414;letter-spacing:0.189px;-webkit-text-stroke:0.2px #141414;">Lower 95.0%</span>
<span class="t" style="left:661.26px;top:544.68px;font-family:'Liberation Sans', sans-serif;font-size:12.7px;font-weight:400;font-style:italic;color:#141414;letter-spacing:0.159px;-webkit-text-stroke:0.2px #141414;">Upper 95.0%</span>
<span class="t" style="left:25.36px;top:564.76px;font-family:'Liberation Sans', sans-serif;font-size:12.7px;font-weight:400;font-style:normal;color:#141414;letter-spacing:0.935px;-webkit-text-stroke:0.2px #141414;">Intercept</span>
<span class="t" style="left:24.66px;top:584.84px;font-family:'Liberation Sans', sans-serif;font-size:12.7px;font-weight:400;font-style:normal;color:#141414;letter-spacing:0.187px;-webkit-text-stroke:0.2px #141414;">JS_Center</span>
<span class="t" style="left:24.66px;top:604.92px;font-family:'Liberation Sans', sans-serif;font-size:12.7px;font-weight:400;font-style:normal;color:#141414;letter-spacing:0.692px;-webkit-text-stroke:0.2px #141414;">A_Center</span>
<span class="t" style="left:24.66px;top:625.00px;font-family:'Liberation Sans', sans-serif;font-size:12.7px;font-weight:400;font-style:normal;color:#141414;letter-spacing:-0.357px;-webkit-text-stroke:0.2px #141414;">JSxA</span>
<span class="t" style="left:111.79px;top:564.76px;font-family:'Liberation Sans', sans-serif;font-size:12.7px;font-weight:400;font-style:normal;color:#141414;letter-spacing:0.177px;-webkit-text-stroke:0.2px #141414;">12.9548385</span>
<span class="t" style="left:191.49px;top:564.76px;font-family:'Liberation Sans', sans-serif;font-size:12.7px;font-weight:400;font-style:normal;color:#141414;letter-spacing:0.177px;-webkit-text-stroke:0.2px #141414;">1.53355224</span>
<span class="t" style="left:271.19px;top:564.76px;font-family:'Liberation Sans', sans-serif;font-size:12.7px;font-weight:400;font-style:normal;color:#141414;letter-spacing:0.177px;-webkit-text-stroke:0.2px #141414;">8.44760174</span>
<span class="t" style="left:353.33px;top:564.76px;font-family:'Liberation Sans', sans-serif;font-size:12.7px;font-weight:400;font-style:normal;color:#141414;letter-spacing:0.064px;-webkit-text-stroke:0.2px #141414;">6.2783E-09</span>
<span class="t" style="left:430.59px;top:564.76px;font-family:'Liberation Sans', sans-serif;font-size:12.7px;font-weight:400;font-style:normal;color:#141414;letter-spacing:0.177px;-webkit-text-stroke:0.2px #141414;">9.80257677</span>
<span class="t" style="left:510.29px;top:564.76px;font-family:'Liberation Sans', sans-serif;font-size:12.7px;font-weight:400;font-style:normal;color:#141414;letter-spacing:0.177px;-webkit-text-stroke:0.2px #141414;">16.1071003</span>
<span class="t" style="left:589.99px;top:564.76px;font-family:'Liberation Sans', sans-serif;font-size:12.7px;font-weight:400;font-style:normal;color:#141414;letter-spacing:0.177px;-webkit-text-stroke:0.2px #141414;">9.80257677</span>
<span class="t" style="left:669.69px;top:564.76px;font-family:'Liberation Sans', sans-serif;font-size:12.7px;font-weight:400;font-style:normal;color:#141414;letter-spacing:0.177px;-webkit-text-stroke:0.2px #141414;">16.1071003</span>
<span class="t" style="left:118.86px;top:584.84px;font-family:'Liberation Sans', sans-serif;font-size:12.7px;font-weight:400;font-style:normal;color:#141414;letter-spacing:0.196px;-webkit-text-stroke:0.2px #141414;">1.6197786</span>
<span class="t" style="left:198.56px;top:584.84px;font-family:'Liberation Sans', sans-serif;font-size:12.7px;font-weight:400;font-style:normal;color:#141414;letter-spacing:0.196px;-webkit-text-stroke:0.2px #141414;">0.7878496</span>
<span class="t" style="left:271.19px;top:584.84px;font-family:'Liberation Sans', sans-serif;font-size:12.7px;font-weight:400;font-style:normal;color:#141414;letter-spacing:0.177px;-webkit-text-stroke:0.2px #141414;">2.05594899</span>
<span class="t" style="left:357.96px;top:584.84px;font-family:'Liberation Sans', sans-serif;font-size:12.7px;font-weight:400;font-style:normal;color:#141414;letter-spacing:0.196px;-webkit-text-stroke:0.2px #141414;">0.0499566</span>
<span class="t" style="left:430.59px;top:584.84px;font-family:'Liberation Sans', sans-serif;font-size:12.7px;font-weight:400;font-style:normal;color:#141414;letter-spacing:0.177px;-webkit-text-stroke:0.2px #141414;">0.00033054</span>
<span class="t" style="left:510.29px;top:584.84px;font-family:'Liberation Sans', sans-serif;font-size:12.7px;font-weight:400;font-style:normal;color:#141414;letter-spacing:0.177px;-webkit-text-stroke:0.2px #141414;">3.23922665</span>
<span class="t" style="left:589.99px;top:584.84px;font-family:'Liberation Sans', sans-serif;font-size:12.7px;font-weight:400;font-style:normal;color:#141414;letter-spacing:0.177px;-webkit-text-stroke:0.2px #141414;">0.00033054</span>
<span class="t" style="left:669.69px;top:584.84px;font-family:'Liberation Sans', sans-serif;font-size:12.7px;font-weight:400;font-style:normal;color:#141414;letter-spacing:0.177px;-webkit-text-stroke:0.2px #141414;">3.23922665</span>
<span class="t" style="left:111.79px;top:604.92px;font-family:'Liberation Sans', sans-serif;font-size:12.7px;font-weight:400;font-style:normal;color:#141414;letter-spacing:0.177px;-webkit-text-stroke:0.2px #141414;">1.02969478</span>
<span class="t" style="left:191.49px;top:604.92px;font-family:'Liberation Sans', sans-serif;font-size:12.7px;font-weight:400;font-style:normal;color:#141414;letter-spacing:0.177px;-webkit-text-stroke:0.2px #141414;">0.71399081</span>
<span class="t" style="left:271.19px;top:604.92px;font-family:'Liberation Sans', sans-serif;font-size:12.7px;font-weight:400;font-style:normal;color:#141414;letter-spacing:0.281px;-webkit-text-stroke:0.2px #141414;">1.44216811</span>
<span class="t" style="left:350.89px;top:604.92px;font-family:'Liberation Sans', sans-serif;font-size:12.7px;font-weight:400;font-style:normal;color:#141414;letter-spacing:0.281px;-webkit-text-stroke:0.2px #141414;">0.16119361</span>
<span class="t" style="left:426.09px;top:604.92px;font-family:'Liberation Sans', sans-serif;font-size:12.7px;font-weight:400;font-style:normal;color:#141414;letter-spacing:0.186px;-webkit-text-stroke:0.2px #141414;">-0.43793436</span>
<span class="t" style="left:510.29px;top:604.92px;font-family:'Liberation Sans', sans-serif;font-size:12.7px;font-weight:400;font-style:normal;color:#141414;letter-spacing:0.177px;-webkit-text-stroke:0.2px #141414;">2.49732392</span>
<span class="t" style="left:585.49px;top:604.92px;font-family:'Liberation Sans', sans-serif;font-size:12.7px;font-weight:400;font-style:normal;color:#141414;letter-spacing:0.186px;-webkit-text-stroke:0.2px #141414;">-0.43793436</span>
<span class="t" style="left:669.69px;top:604.92px;font-family:'Liberation Sans', sans-serif;font-size:12.7px;font-weight:400;font-style:normal;color:#141414;letter-spacing:0.177px;-webkit-text-stroke:0.2px #141414;">2.49732392</span>
<span class="t" style="left:107.29px;top:625.00px;font-family:'Liberation Sans', sans-serif;font-size:12.7px;font-weight:400;font-style:normal;color:#141414;letter-spacing:0.186px;-webkit-text-stroke:0.2px #141414;">-0.33466761</span>
<span class="t" style="left:198.56px;top:625.00px;font-family:'Liberation Sans', sans-serif;font-size:12.7px;font-weight:400;font-style:normal;color:#141414;letter-spacing:0.196px;-webkit-text-stroke:0.2px #141414;">0.3387245</span>
<span class="t" style="left:266.69px;top:625.00px;font-family:'Liberation Sans', sans-serif;font-size:12.7px;font-weight:400;font-style:normal;color:#141414;letter-spacing:0.186px;-webkit-text-stroke:0.2px #141414;">-0.98802306</span>
<span class="t" style="left:350.89px;top:625.00px;font-family:'Liberation Sans', sans-serif;font-size:12.7px;font-weight:400;font-style:normal;color:#141414;letter-spacing:0.177px;-webkit-text-stroke:0.2px #141414;">0.33224753</span>
<span class="t" style="left:426.09px;top:625.00px;font-family:'Liberation Sans', sans-serif;font-size:12.7px;font-weight:400;font-style:normal;color:#141414;letter-spacing:0.186px;-webkit-text-stroke:0.2px #141414;">-1.03092578</span>
<span class="t" style="left:510.29px;top:625.00px;font-family:'Liberation Sans', sans-serif;font-size:12.7px;font-weight:400;font-style:normal;color:#141414;letter-spacing:0.177px;-webkit-text-stroke:0.2px #141414;">0.36159056</span>
<span class="t" style="left:585.49px;top:625.00px;font-family:'Liberation Sans', sans-serif;font-size:12.7px;font-weight:400;font-style:normal;color:#141414;letter-spacing:0.186px;-webkit-text-stroke:0.2px #141414;">-1.03092578</span>
<span class="t" style="left:669.69px;top:625.00px;font-family:'Liberation Sans', sans-serif;font-size:12.7px;font-weight:400;font-style:normal;color:#141414;letter-spacing:0.177px;-webkit-text-stroke:0.2px #141414;">0.36159056</span>
<svg style="left:0;top:0" width="782" height="934" viewBox="0 0 782 934"><path d="M147.4 596.8L159.0 619.6L151.2 619.6L151.2 696.3L143.6 696.3L143.6 619.6L135.8 619.6Z" fill="#fe0000"/></svg>
<svg style="left:0;top:0" width="782" height="934" viewBox="0 0 782 934"><path d="M304.5 596.8L316.1 619.6L308.3 619.6L308.3 696.3L300.7 696.3L300.7 619.6L292.9 619.6Z" fill="#fe0000"/></svg>
<svg style="left:0;top:0" width="782" height="934" viewBox="0 0 782 934"><path d="M390.8 596.8L402.4 619.6L394.6 619.6L394.6 696.3L387.0 696.3L387.0 619.6L379.2 619.6Z" fill="#fe0000"/></svg>
<div class="r" style="left:658.70px;top:658.58px;width:82.50px;height:23.28px;background:transparent;border:2px solid #107c41;box-sizing:border-box;"></div>
<div class="r" style="left:736.30px;top:676.66px;width:7.60px;height:7.60px;background:#107c41;border:1px solid #fff;box-sizing:border-box;"></div>
<svg style="left:0;top:0" width="782" height="934" viewBox="0 0 782 934" fill="none" stroke-linecap="round" stroke-linejoin="round">

<!-- excel logo -->
<g>
 <rect x="16.6" y="13.2" width="12.6" height="15.8" rx="1.4" fill="#21a366"/>
 <path d="M22.9 13.2h4.9a1.4 1.4 0 0 1 1.4 1.4v3.9h-6.3z" fill="#33c481"/>
 <path d="M16.6 13.2h6.3v5.3h-6.3z" fill="#21a366"/>
 <path d="M16.6 18.5h6.3v5.2h-6.3z" fill="#107c41"/>
 <path d="M22.9 18.5h6.3v5.2h-6.3z" fill="#21a366"/>
 <path d="M16.6 23.7h12.6v3.9a1.4 1.4 0 0 1-1.4 1.4h-9.8a1.4 1.4 0 0 1-1.4-1.4z" fill="#185c37"/>
 <rect x="13.2" y="16.3" width="10.4" height="10.2" rx="1.2" fill="#107c41"/>
 <path d="M16.2 18.6l4.4 5.7M20.6 18.6l-4.4 5.7" stroke="#fff" stroke-width="1.5" stroke-linecap="butt"/>
</g>
<!-- save -->
<g>
 <path d="M183.300 13.700h15.200v15.200h-13.200l-2-2z" fill="#c56ad3" stroke="#a63fba" stroke-width="1.100" stroke-linejoin="miter"/>
 <rect x="186.900" y="14.900" width="7.500" height="4" fill="#fdf6fd"/>
 <rect x="187.500" y="24.300" width="6.400" height="4.100" fill="#fdf6fd"/>
</g>
<!-- undo -->
<path d="M212.9 13.9v5.9h5.9" stroke="#444" stroke-width="1.25"/>
<path d="M213.2 19.6c2.2-3.6 5.2-6 8.4-6c3 0 4.9 2.2 4.9 5c0 2.2-1 3.700-2.600 5.2l-5.700 4.700" stroke="#444" stroke-width="1.25"/>
<path d="M233.4 19.8l2.6 2.500l2.600-2.500" stroke="#444" stroke-width="1.25"/>
<path d="M254.4 19.300l2.700 2.600l-2.700 2.600M258.600 19.300l2.700 2.600l-2.700 2.600" stroke="#444" stroke-width="1.15"/>
<path d="M340.100 19.600l4.500 4.600l4.500-4.600" stroke="#444" stroke-width="1.25"/>
<!-- search -->
<circle cx="409" cy="18.700" r="4.700" stroke="#555" stroke-width="1.25"/>
<path d="M405.600 22.300l-5.300 5.700" stroke="#555" stroke-width="1.35"/>
<!-- warning -->
<path d="M459 14.500l7 13.300h-14z" fill="#fbe1a2" stroke="#e98a2e" stroke-width="1.45"/>
<path d="M459 18.400v5.600" stroke="#4a4a4a" stroke-width="1.7" stroke-linecap="butt"/>
<rect x="458.150" y="25" width="1.700" height="1.500" fill="#4a4a4a"/>
<!-- megaphone -->
<path d="M617 15.100l4.900 5.400l-10.900 7.900l-2.700-1.700z" fill="#fff" stroke="#555" stroke-width="1.25"/>
<path d="M614.300 26.200a1.800 1.800 0 1 0 2.700-1.900" stroke="#555" stroke-width="1.150"/>
<path d="M619 13.600l.5 1.200M622.100 15l1-1.300M622.800 18.200l1.300-.3" stroke="#2b9be8" stroke-width="1.500"/>
<!-- window controls -->
<path d="M657.600 20.700h10.100" stroke="#555" stroke-width="1.300"/>
<rect x="705.500" y="16.500" width="10" height="10" rx="1.600" stroke="#555" stroke-width="1.300"/>
<path d="M753.200 16.500l10.400 10.200M763.600 16.500l-10.400 10.200" stroke="#555" stroke-width="1.250"/>
<!-- comment button icon -->
<path d="M701.400 55.300h8.600a1 1 0 0 1 1 1v4.700a1 1 0 0 1-1 1h-4.700l-2.700 2.500v-2.500h-1.200a1 1 0 0 1-1-1v-4.700a1 1 0 0 1 1-1z" stroke="#333" stroke-width="1.200"/>
<!-- share icon -->
<path d="M737.700 59.600v6.100h10.700v-3.300" stroke="#fff" stroke-width="1.300"/>
<path d="M740.600 62.600c.3-3 2.300-4.700 5.500-4.800v-2.900l3.600 3.900l-3.600 3.700v-2.600c-2.500-.1-4 .7-5.500 2.700z" stroke="#fff" stroke-width="1.100"/>
<path d="M759.200 59.700l2.800 2.700l2.800-2.700" stroke="#fff" stroke-width="1.700"/>

<path d="M36.600 88.600v18.400c0 2.300 4.600 4.200 10.400 4.200" stroke="#444" stroke-width="1.250"/>
<path d="M57.400 88.600v9.400" stroke="#444" stroke-width="1.250"/>
<ellipse cx="47" cy="88.600" rx="10.400" ry="4.200" fill="#fff" stroke="#444" stroke-width="1.250"/>
<rect x="47.300" y="98.600" width="15.700" height="15.200" fill="#fff" stroke="#444" stroke-width="1.250"/>
<path d="M47.300 100.200h15.700" stroke="#444" stroke-width="2"/>
<path d="M47.300 105.400h15.700M47.300 109.600h15.700M52.500 101v12.800M57.800 101v12.800" stroke="#444" stroke-width="1.050"/>

<path d="M79.3 83.9h6.2l3.6 3.6v11.2h-9.8z" fill="#fff" stroke="#444" stroke-width="1.15"/><path d="M85.5 83.9v3.6h3.6" stroke="#444" stroke-width="1.15"/>
<rect x="86.200" y="90.300" width="6.200" height="8.600" fill="#fff" stroke="#444" stroke-width="1.100"/><path d="M87.900 92.600h2.800M87.900 94.600h2.800M87.900 96.600h2.800" stroke="#444" stroke-width=".9"/>

<path d="M103.100 84.800h15.400v6.500M103.100 84.800v13.500h5.600" stroke="#444" stroke-width="1.150"/>
<path d="M103.100 88.200h15.400M103.100 91.600h8M103.100 95h6M108.200 84.800v5.500M113.400 84.800v4.500" stroke="#444" stroke-width="1"/>
<path d="M110 92.800h2.200l1-1.500h3.400l1 1.500h1.600v6h-9.200z" fill="#fff" stroke="#2b88d8" stroke-width="1.250"/>
<circle cx="114.800" cy="95.700" r="1.600" stroke="#2b88d8" stroke-width="1.100"/>

<path d="M124.9 90.6l2.60 2.50l2.60 -2.50" stroke="#444" stroke-width="1.2"/>
<path d="M79.3 109.9h6.2l3.6 3.6v11.0h-9.8z" fill="#fff" stroke="#444" stroke-width="1.15"/><path d="M85.5 109.9v3.6h3.6" stroke="#444" stroke-width="1.15"/>
<circle cx="88.900" cy="120.200" r="4.500" fill="#2b88d8" stroke="#fff" stroke-width=".8"/><path d="M84.600 120.200h8.600M88.900 116v8.400M88.900 116c-2.400 2.600-2.400 5.800 0 8.400c2.400-2.600 2.400-5.800 0-8.400" stroke="#e8f3fc" stroke-width=".75"/>
<path d="M105.4 109.9h6.2l3.6 3.6v11.0h-9.8z" fill="#fff" stroke="#444" stroke-width="1.15"/><path d="M111.6 109.9v3.6h3.6" stroke="#444" stroke-width="1.15"/>
<circle cx="114.600" cy="120.200" r="4.300" fill="#fff" stroke="#2b88d8" stroke-width="1.300"/><path d="M114.600 117.700v2.700h2.200" stroke="#2b88d8" stroke-width="1.100"/>

<rect x="77.600" y="135.700" width="14.200" height="14.200" fill="#fff" stroke="#444" stroke-width="1.200"/>
<path d="M77.600 140.400h14.200M77.600 143.600h14.200M77.600 146.800h14.200M84.700 135.700v14.200" stroke="#444" stroke-width="1"/>
<path d="M79.700 137.400h3l-1.500 1.800zM86.700 137.400h3l-1.500 1.800z" fill="#2b88d8" stroke="#2b88d8" stroke-width=".6"/>

<path d="M105.4 135.4h6.2l3.6 3.6v11.6h-9.8z" fill="#fff" stroke="#444" stroke-width="1.15"/><path d="M111.6 135.4v3.6h3.6" stroke="#444" stroke-width="1.15"/>
<path d="M111.200 143.300v6c0 1 1.700 1.700 3.900 1.700s3.900-.7 3.900-1.700v-6" fill="#fff" stroke="#e8862a" stroke-width="1.300"/><ellipse cx="115.100" cy="143.300" rx="3.900" ry="1.700" fill="#fff" stroke="#e8862a" stroke-width="1.300"/>
<path d="M59.9 139.9l2.70 2.60l2.70 -2.60" stroke="#444" stroke-width="1.2"/>

<path d="M183.800 109.600v-24.900h13.600" stroke="#444" stroke-width="1.250"/>
<path d="M187.300 112v-24.200h11l7 7.300v16.900z" fill="#f4f4f4" stroke="none"/>
<path d="M194.600 112h-7.300v-24.200h11l7 7.300v2.700M198.300 87.800v7.300h7" stroke="#444" stroke-width="1.250"/>
<circle cx="203.400" cy="106.200" r="8.600" fill="#fff" stroke="none"/>
<path d="M197 104.400a6.600 6.600 0 0 1 12.400-1.400M209.800 108a6.600 6.600 0 0 1-12.400 1.400" stroke="#3fae68" stroke-width="1.600"/>
<path d="M210.300 99.300v4.200h-4.200M196.600 113.100v-4.200h4.200" stroke="#3fae68" stroke-width="1.600"/>

<path d="M205.6 140.9l2.70 2.60l2.70 -2.60" stroke="#444" stroke-width="1.2"/>

<rect x="229.500" y="84.500" width="15.700" height="13.500" fill="#f4f4f4" stroke="#444" stroke-width="1.300"/>
<path d="M229.500 86.900h15.700" stroke="#444" stroke-width="1.300"/>
<rect x="240.300" y="87.500" width="4.300" height="9.900" fill="#fff"/>
<path d="M239.900 87.500v9.900" stroke="#2b88d8" stroke-width="1.300" stroke-linecap="butt"/>
<path d="M242.600 89.600v.1M242.600 91.900v.1M242.600 94.200v.1" stroke="#2b88d8" stroke-width="1.300"/>


<rect x="231.800" y="109.500" width="11.200" height="15" fill="#f6f6f6" stroke="#b4b4b4" stroke-width="1.100"/>
<path d="M234.600 114.700h2.600M238.800 114.700h1.400M234.600 119.300h2.600M238.800 119.300h1.400" stroke="#b4b4b4" stroke-width="1.600" stroke-linecap="butt"/>

<path d="M231.8 135.7h6.2l3.6 3.6v11.4h-9.8z" fill="#f8f8f8" stroke="#b4b4b4" stroke-width="1.15"/><path d="M238.0 135.7v3.6h3.6" stroke="#b4b4b4" stroke-width="1.15"/>
<rect x="236.400" y="145" width="9.600" height="6.400" fill="#fdfdfd" stroke="none"/><rect x="236.600" y="145.700" width="5.400" height="4.400" rx="2.200" stroke="#b4b4b4" stroke-width="1.150"/><rect x="240" y="145.700" width="5.400" height="4.400" rx="2.200" stroke="#b4b4b4" stroke-width="1.150"/>

<path d="M299.900 84.700l12.600 9.100l-12.600 9.100l-13.200-9.100z" fill="#fff" stroke="#444" stroke-width="1.250"/>
<path d="M308.700 96.600l3.800 2.700l-13 10.400" stroke="#444" stroke-width="1.250"/>
<path d="M288.400 98.200c-3.800 1.600-5 5.400-3.200 8c1.700 2.400 5.400 2.900 9.600 2.700" stroke="#2b88d8" stroke-width="1.450"/>
<path d="M291.400 104.900l4.300 4l-4.300 4.200" stroke="#2b88d8" stroke-width="1.450"/>

<path d="M312.2 139.9l2.70 2.60l2.70 -2.60" stroke="#444" stroke-width="1.2"/>
<path d="M356.600 83.100h26.400v2.600l-10 12.600v11h-6.200v-11l-10.200-12.600z" fill="#fff" stroke="#444" stroke-width="1.300"/>
<path d="M382.7 137.8l2.70 2.60l2.70 -2.60" stroke="#444" stroke-width="1.2"/>

<rect x="439.400" y="82.700" width="20.200" height="11.800" fill="#7db7ee" stroke="#2b7cd3" stroke-width="1.300"/>
<path d="M439.400 88.800h20.200" stroke="#2b7cd3" stroke-width="1.200"/>
<path d="M439.400 94.500v6M459.600 94.500v4.200" stroke="#444" stroke-width="1.300"/>
<path d="M439.400 100.500h11.600l3.400 5.100l-3.400 5.100h-11.600z" fill="#7db7ee" stroke="#2b7cd3" stroke-width="1.300"/>
<path d="M455 100.100l10.600 10.800M465.600 100.100l-10.600 10.800" stroke="#e8474c" stroke-width="1.450"/>

<path d="M470.6 137.8l2.70 2.60l2.70 -2.60" stroke="#444" stroke-width="1.2"/>

<rect x="512.500" y="85.500" width="27.600" height="21.300" fill="#f7f7f7" stroke="none"/>
<rect x="512.500" y="85.500" width="9.400" height="7.100" fill="#5fa6e8"/>
<rect x="512.500" y="99.600" width="9.400" height="7.200" fill="#5fa6e8"/>
<path d="M512.500 85.500h27.600v9M512.500 85.500v21.300h19.500M512.500 92.600h27.600M512.500 99.600h20M521.900 85.500v21.300M531.500 85.500v21.300" stroke="#555" stroke-width="1.100"/>
<path d="M512.500 85.500h9.400v7.100h-9.400zM512.500 99.600h9.400v7.200h-9.400z" stroke="#2b7cd3" stroke-width="1.200"/>
<circle cx="537.800" cy="103" r="5.600" fill="#fdfdfd" stroke="none"/>
<path d="M533.800 99.800c0-2.400 1.700-3.900 3.900-3.900c2.300 0 4 1.500 4 3.700c0 2.600-3.800 3.500-3.900 7" stroke="#2b88d8" stroke-width="1.500"/>
<circle cx="537.800" cy="110.600" r="1.100" fill="#2b88d8"/>

<path d="M523.1 137.3l2.80 2.70l2.80 -2.70" stroke="#444" stroke-width="1.2"/>

<rect x="593.300" y="83.500" width="10.300" height="24" fill="#fff" stroke="#444" stroke-width="1.300"/>
<path d="M593.300 89.500h10.300M593.300 95.600h10.300M593.300 101.700h10.300" stroke="#444" stroke-width="1.100"/>
<path d="M590.500 84.200h-6v23h6" stroke="#666" stroke-width="1.100"/>
<rect x="580.200" y="91.600" width="8.600" height="8.200" fill="#fff" stroke="#444" stroke-width="1.300"/>
<path d="M582.300 95.700h4.400M584.500 93.500v4.400" stroke="#2b88d8" stroke-width="1.300" stroke-linecap="butt"/>

<path d="M588.5 137.5l2.80 2.70l2.80 -2.70" stroke="#444" stroke-width="1.2"/>

<rect x="638.300" y="84.900" width="14.200" height="13.200" fill="#f4f4f4" stroke="#b9b9b9" stroke-width="1"/>
<path d="M638.300 88.200h14.200M638.300 91.500h14.200M638.300 94.800h14.200M643 84.900v13.200M647.800 84.900v13.200" stroke="#b9b9b9" stroke-width=".9"/>
<rect x="644.200" y="89.700" width="9.600" height="9" fill="#fff" stroke="#9a9a9a" stroke-width=".9"/>
<rect x="644.200" y="89.700" width="9.600" height="2.600" fill="#3f7fd6"/>
<path d="M646 94.500h6M646 96.500h6" stroke="#b0b0b0" stroke-width=".9"/>

<path d="M755 158.700l4.700 4.800l4.700-4.800" stroke="#444" stroke-width="1.300"/><path d="M91.600 194.800l4.500 4.600l4.500-4.600" stroke="#444" stroke-width="1.300"/>
<path d="M134.500 190.500l11 11M145.500 190.500l-11 11" stroke="#b3b3b3" stroke-width="1.100"/>
<path d="M156.300 195.700l5.200 5l10.200-10.200" stroke="#b3b3b3" stroke-width="1.100"/>
<path d="M760 192.300l4.700 4.800l4.700-4.800" stroke="#444" stroke-width="1.300"/>
<path d="M32 890.500l-5.300 4.600l5.300 4.600" stroke="#8c8c8c" stroke-width="1.300"/>
<path d="M58.800 890.500l5.300 4.600l-5.300 4.600" stroke="#8c8c8c" stroke-width="1.300"/>
<path d="M277 895.300h10.200M282.100 890.200v10.200" stroke="#444" stroke-width="1.250" stroke-linecap="butt"/>

<circle cx="82.700" cy="917.400" r="1.900" fill="#f5f5f5" stroke="#333" stroke-width="1"/>
<path d="M82.200 924.600L79.500 928.700Q79.100 929.300 78.400 929.300Q77.400 929.200 77.600 928.200L79.900 924.200L80 922.500L76.200 921.200Q75.600 921 75.400 920.400Q75.500 919.400 76.400 919.400L80.500 920.400Q82.700 921 84.900 920.400L88.200 919.500Q89.100 919.500 88.800 920.500Q88.600 921.100 88 921.200L85.200 922.300L85.200 922.900" stroke="#333" stroke-width="1"/>
<path d="M83.500 923.900l5.200 5M88.700 923.900l-5.200 5" stroke="#333" stroke-width="1.100"/>


<rect x="485.600" y="915.500" width="12.800" height="12.400" stroke="#333" stroke-width="1.300"/>
<path d="M489.900 915.500v12.400M494.100 915.500v12.400M485.600 919.600h12.800M485.600 923.800h12.800" stroke="#333" stroke-width="1.200"/>
<rect x="525.400" y="915.500" width="13.600" height="12.400" rx="1" stroke="#333" stroke-width="1.250"/>
<rect x="528.400" y="918" width="7.600" height="7.600" stroke="#333" stroke-width="1"/>
<path d="M530.200 920.300h4M530.200 921.900h4M530.200 923.500h4" stroke="#333" stroke-width=".8"/>
<rect x="565.400" y="915.500" width="13.600" height="12.400" rx="1" stroke="#333" stroke-width="1.250"/>
<path d="M571.600 915.500v6.400M565.400 921.900h9.700v-6.400" stroke="#333" stroke-width="1.150"/>

<path d="M598.600 922.100h6.400" stroke="#444" stroke-width="1.200" stroke-linecap="butt"/>
<path d="M611.400 922.100h98.900" stroke="#6a6a6a" stroke-width="1" stroke-linecap="butt"/>
<rect x="658.900" y="916" width="4.800" height="12.600" rx="1" fill="#555"/>
<path d="M715.600 922.100h7.400M719.300 918.400v7.400" stroke="#444" stroke-width="1.200" stroke-linecap="butt"/>
</svg>
</div>
</body></html>
